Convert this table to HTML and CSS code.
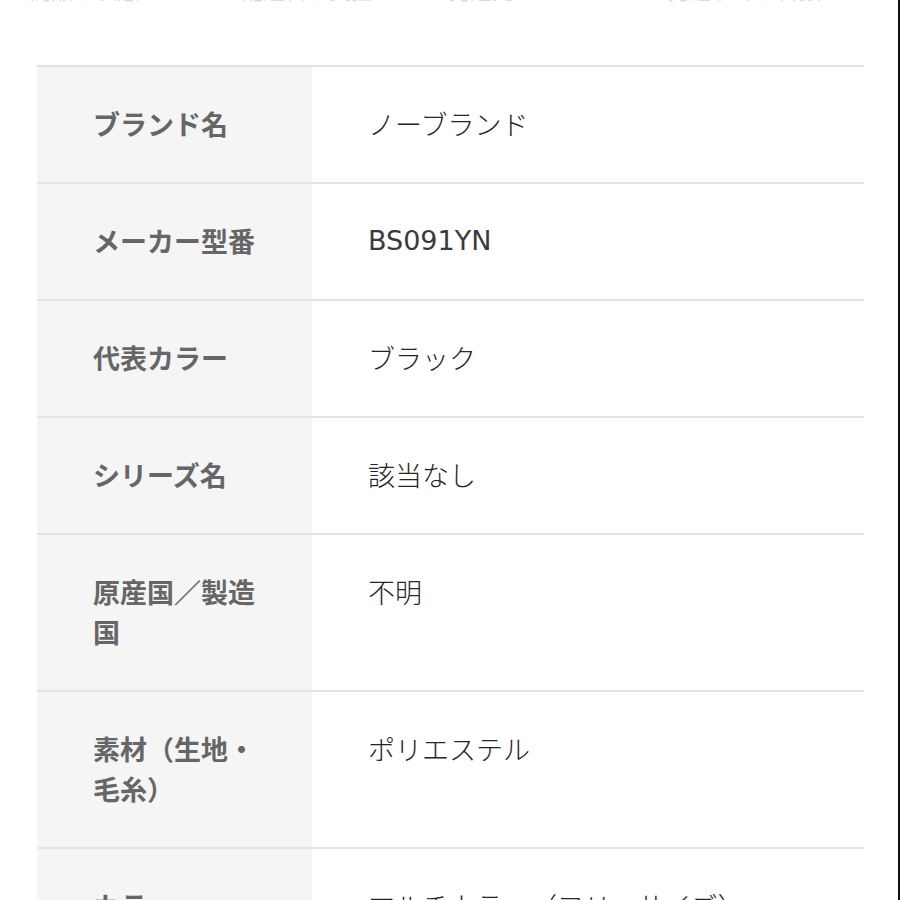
FILE: index.html
```html
<!DOCTYPE html>
<html lang="ja">
<head>
<meta charset="utf-8">
<link rel="stylesheet" href="styles.css">
</head>
<body>
<div class="page">
  <div class="top">
    <div class="tabs">
      <span class="tab t1">商品の状態</span>
      <span class="tab t2">配送料の負担</span>
      <span class="tab t3">発送元</span>
      <span class="tab t4">発送までの日数</span>
    </div>
  </div>
  <div class="table">
    <div class="row"><div class="label">ブランド名</div><div class="value">ノーブランド</div></div>
    <div class="row"><div class="label">メーカー型番</div><div class="value code">BS091YN</div></div>
    <div class="row"><div class="label">代表カラー</div><div class="value">ブラック</div></div>
    <div class="row"><div class="label">シリーズ名</div><div class="value">該当なし</div></div>
    <div class="row"><div class="label">原産国／製造国</div><div class="value">不明</div></div>
    <div class="row"><div class="label">素材（生地・毛糸）</div><div class="value">ポリエステル</div></div>
    <div class="row"><div class="label">カラー</div><div class="value">マルチカラー（フリーサイズ）</div></div>
  </div>
</div>
</body>
</html>
```

FILE: styles.css
```css
html, body {
  margin: 0;
  padding: 0;
  background: #fff;
}
body {
  font-family: "Noto Sans CJK JP", "Noto Sans", sans-serif;
  height: 900px;
  overflow: hidden;
}
.page {
  height: 900px;
  border-right: 2px solid #111;
  box-sizing: border-box;
  overflow: hidden;
}
.top {
  height: 65px;
  overflow: hidden;
}
.tabs {
  display: flex;
  margin-top: -24px;
  font-size: 22px;
  line-height: 27px;
  color: #dcdcdc;
  white-space: nowrap;
}
.tab { display: block; }
.t1 { margin-left: 29px; width: 212px; }
.t2 { width: 207px; }
.t3 { width: 219px; }
.table {
  margin-left: 37px;
  width: 827px;
}
.row {
  display: grid;
  grid-template-columns: 275px 1fr;
  border-top: 2px solid #e4e4e4;
  font-size: 27px;
  line-height: 40px;
}
.label {
  background: #f5f5f5;
  color: #666;
  font-weight: 700;
  padding: 37px 56px 38px 56px;
}
.value {
  color: #262626;
  font-weight: 300;
  padding: 37px 56px 38px 56px;
}
.value.code {
  font-family: "DejaVu Sans", "Noto Sans CJK JP", sans-serif;
  font-weight: 400;
  font-size: 27px;
  color: #3a3a3a;
}
```
